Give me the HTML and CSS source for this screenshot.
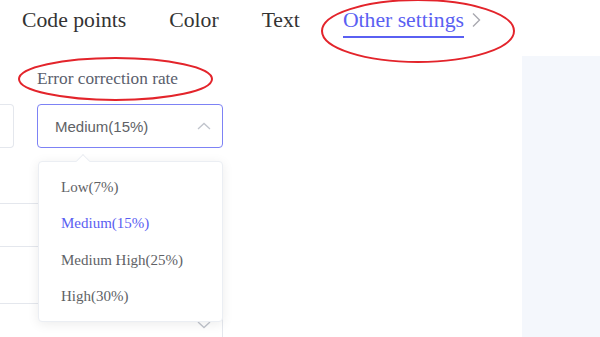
FILE: index.html
```html
<!DOCTYPE html>
<html>
<head>
<meta charset="utf-8">
<link rel="stylesheet" href="styles.css">
</head>
<body>
<div class="page">
  <nav class="tabs">
    <div class="tab">Code points</div>
    <div class="tab">Color</div>
    <div class="tab">Text</div>
    <div class="tab-wrap">
      <div class="tab active">Other settings</div>
      <svg class="next" width="10" height="16" viewBox="0 0 10 16"><path d="M2 1.5 L8.5 8 L2 14.5" fill="none" stroke="#a9a9b0" stroke-width="1.4"/></svg>
    </div>
  </nav>
  <main class="main">
    <section class="form">
      <div class="label">Error correction rate</div>
      <div class="row">
        <div class="box side"></div>
        <div class="box select focused">
          <span class="value">Medium(15%)</span>
          <svg class="chev" width="14" height="8" viewBox="0 0 14 8"><path d="M1 7 L7 1.5 L13 7" fill="none" stroke="#c0c4cc" stroke-width="1.3"/></svg>
        </div>
      </div>
      <div class="box wide row2"></div>
      <div class="box wide row3">
        <svg class="chev" width="14" height="8" viewBox="0 0 14 8"><path d="M1 1 L7 6.5 L13 1" fill="none" stroke="#c0c4cc" stroke-width="1.3"/></svg>
      </div>
      <div class="dropdown">
        <div class="arrow"></div>
        <div class="item">Low(7%)</div>
        <div class="item selected">Medium(15%)</div>
        <div class="item">Medium High(25%)</div>
        <div class="item">High(30%)</div>
      </div>
    </section>
    <aside class="preview"></aside>
  </main>
  <svg class="marks" width="600" height="337" viewBox="0 0 600 337">
    <ellipse cx="418" cy="31" rx="96" ry="31" fill="none" stroke="#e3242b" stroke-width="2"/>
    <ellipse cx="115.5" cy="79" rx="96.5" ry="21" fill="none" stroke="#e3242b" stroke-width="2"/>
  </svg>
</div>
</body>
</html>
```
FILE: styles.css
```css
* { box-sizing: border-box; }
html, body { margin: 0; padding: 0; background: #fff; }
.page {
  position: relative;
  width: 600px;
  height: 337px;
  overflow: hidden;
  font-family: "Liberation Serif", "Times New Roman", serif;
}
.tabs {
  display: flex;
  align-items: flex-start;
  gap: 43px;
  height: 56px;
  padding-left: 22px;
}
.tab {
  font-size: 21.7px;
  line-height: 28px;
  padding-top: 6px;
  padding-bottom: 2px;
  color: #333;
  border-bottom: 2px solid transparent;
}
.tab-wrap { display: flex; align-items: flex-start; gap: 7px; }
.tab.active { color: #5a60f2; border-bottom-color: #5a60f2; }
.next { margin-top: 12px; }
.main { display: flex; height: 281px; }
.form {
  position: relative;
  width: 522px;
  padding-top: 13px;
}
.label {
  font-size: 17.3px;
  line-height: 20px;
  color: #5a5e6c;
  padding-left: 37px;
}
.row {
  display: flex;
  gap: 23px;
  margin-top: 15px;
  height: 44px;
}
.box {
  border: 1px solid #e4e7ed;
  border-radius: 4px;
  height: 44px;
}
.side { width: 14px; border-left: none; border-radius: 0 4px 4px 0; }
.select {
  width: 186px;
  display: flex;
  align-items: center;
  justify-content: space-between;
  padding: 0 11px 0 17px;
  font-family: "Liberation Sans", Arial, sans-serif;
  font-size: 15px;
  color: #606266;
}
.focused { border-color: #7d82f5; }
.wide {
  width: 223px;
  border-left: none;
  border-radius: 0 4px 4px 0;
}
.row2 { margin-top: 55px; }
.row3 {
  margin-top: 56px;
  display: flex;
  align-items: center;
  justify-content: flex-end;
  padding-right: 11px;
}
.dropdown {
  position: absolute;
  left: 38px;
  top: 105px;
  width: 185px;
  height: 161px;
  background: #fff;
  border: 1px solid #ebeef3;
  border-radius: 4px;
  box-shadow: 0 2px 12px rgba(0, 0, 0, 0.08);
  padding: 7px 0 8px;
}
.arrow {
  position: absolute;
  left: 39px;
  top: -6px;
  width: 10px;
  height: 10px;
  background: #fff;
  border-left: 1px solid #ebeef3;
  border-top: 1px solid #ebeef3;
  transform: rotate(45deg);
}
.item {
  font-size: 15px;
  line-height: 36.3px;
  padding-left: 22px;
  color: #606266;
}
.item.selected { color: #5a60f2; }
.preview {
  flex: 1;
  background: #f4f7fc;
}
.marks { position: absolute; left: 0; top: 0; pointer-events: none; }
```
